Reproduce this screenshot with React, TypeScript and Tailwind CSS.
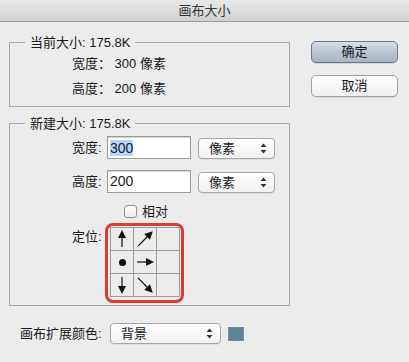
import React from "react";

const font = { fontFamily: '"Liberation Sans", "Noto Sans CJK SC", sans-serif' };

function Stepper() {
  return (
    <svg width="7" height="11" viewBox="0 0 7 11" className="shrink-0">
      <path d="M3.5 0.5 L6.5 4 L0.5 4 Z" fill="#333" />
      <path d="M3.5 10.5 L6.5 7 L0.5 7 Z" fill="#333" />
    </svg>
  );
}

function Select({ label, className }: { label: string; className: string }) {
  return (
    <div
      className={`flex items-center justify-between h-[21px] pl-[10px] pr-[7px] rounded-[4px] border border-[#a6a6a6] bg-gradient-to-b from-white to-[#f1f1f1] shadow-[0_1px_0_rgba(0,0,0,0.06)] text-[13px] text-[#1a1a1a] ${className}`}
    >
      <span>{label}</span>
      <Stepper />
    </div>
  );
}

// arrows for the anchor grid, drawn in a 22x22 cell
function Arrow({ dir }: { dir: string }) {
  const rot: Record<string, number> = { n: 0, ne: 45, e: 90, se: 135, s: 180 };
  const diag = dir === "ne" || dir === "se";
  // diagonal arrows run corner to corner, so they get a longer shaft
  const tail = diag ? 21 : 19;
  const tip = diag ? 0 : 2;
  return (
    <svg width="22" height="22" viewBox="0 0 22 22" overflow="visible">
      <g transform={`rotate(${rot[dir]} 11 11)`}>
        <line x1="11" y1={tail} x2="11" y2={tip + 6} stroke="#111" strokeWidth="1.2" />
        <path d={`M11 ${tip} L15 ${tip + 8} L7 ${tip + 8} Z`} fill="#111" />
      </g>
    </svg>
  );
}

function AnchorGrid() {
  const cells = ["n", "ne", "", "dot", "e", "", "s", "se", ""];
  return (
    <div className="rounded-[8px] border-[3px] border-[#e2392f] pt-[1px] pb-[3px] pl-[2px] pr-[1px]">
      <div className="grid grid-cols-[22px_22px_22px] gap-px bg-[#9c9c9c] border border-[#9c9c9c] w-[70px]">
        {cells.map((c, i) => (
          <div key={i} className="w-[22px] h-[22px] bg-[#ececec] flex items-center justify-center">
            {c === "dot" ? (
              <div className="w-[7px] h-[7px] rounded-full bg-[#111]" />
            ) : c ? (
              <Arrow dir={c} />
            ) : null}
          </div>
        ))}
      </div>
    </div>
  );
}

export default function App() {
  return (
    <div className="w-[409px] h-[362px] bg-[#ececec] overflow-hidden text-[#1a1a1a]" style={font}>
      {/* title bar */}
      <div className="h-[22px] flex items-center justify-center bg-gradient-to-b from-[#e9e9e9] to-[#d0d0d0] border-b border-[#9b9b9b] text-[13px] text-[#333]">
        画布大小
      </div>

      <div className="flex">
        <div className="ml-[9px] w-[281px]">
          {/* current size */}
          <fieldset className="mt-[12px] border border-[#a8a8a8] pt-[4px] pb-[9px] text-[13px] leading-[17px]">
            <legend className="ml-[15px] px-[5px]">当前大小: 175.8K</legend>
            <div className="pl-[62px]">宽度：&nbsp;300 像素</div>
            <div className="pl-[62px] mt-[8px]">高度：&nbsp;200 像素</div>
          </fieldset>

          {/* new size */}
          <fieldset className="mt-[8px] border border-[#a8a8a8] pt-[4px] pb-[2px] text-[13px] leading-[17px]">
            <legend className="ml-[15px] px-[5px]">新建大小: 175.8K</legend>

            <div className="flex items-center pl-[62px]">
              <span className="w-[30px]">宽度:</span>
              <div className="ml-[5px] w-[84px] h-[23px] border border-[#9a9a9a] bg-white shadow-[inset_0_1px_1px_rgba(0,0,0,0.18)] flex items-center pl-[2px] text-[14px]">
                <span className="bg-[#b3d4fd] leading-[16px]">300</span>
              </div>
              <Select label="像素" className="ml-[7px] w-[77px] mt-[1px]" />
            </div>

            <div className="flex items-center pl-[62px] mt-[10px]">
              <span className="w-[30px]">高度:</span>
              <div className="ml-[5px] w-[84px] h-[23px] border border-[#9a9a9a] bg-white shadow-[inset_0_1px_1px_rgba(0,0,0,0.18)] flex items-center pl-[2px] text-[14px]">
                <span className="leading-[16px]">200</span>
              </div>
              <Select label="像素" className="ml-[7px] w-[77px] mt-[3px]" />
            </div>

            <div className="flex items-center pl-[114px] mt-[10px]">
              <div className="w-[13px] h-[13px] rounded-[3px] border border-[#8f8f8f] bg-gradient-to-b from-white to-[#ededed]" />
              <span className="ml-[5px]">相对</span>
            </div>

            <div className="flex items-start pl-[62px] mt-[3px]">
              <span className="w-[30px] mt-[5px]">定位:</span>
              <div className="ml-[3px]">
                <AnchorGrid />
              </div>
            </div>
          </fieldset>

          {/* canvas extension colour */}
          <div className="flex items-center mt-[17px] ml-[11px] text-[13px]">
            <span className="w-[90px]">画布扩展颜色:</span>
            <Select label="背景" className="w-[111px]" />
            <div className="ml-[7px] w-[16px] h-[14px] border border-[#7d8c94] bg-[#5d8597]" />
          </div>
        </div>

        {/* buttons */}
        <div className="ml-[21px] flex flex-col text-[13px]">
          <button className="mt-[19px] w-[87px] h-[22px] rounded-[5px] border border-[#6e7a86] bg-gradient-to-b from-[#d8dfe7] via-[#b9c4d0] to-[#a9b5c2] shadow-[0_1px_0_rgba(0,0,0,0.1)]">
            确定
          </button>
          <button className="mt-[12px] w-[87px] h-[22px] rounded-[5px] border border-[#a0a0a0] bg-gradient-to-b from-white to-[#f0f0f0] shadow-[0_1px_0_rgba(0,0,0,0.08)]">
            取消
          </button>
        </div>
      </div>
    </div>
  );
}
